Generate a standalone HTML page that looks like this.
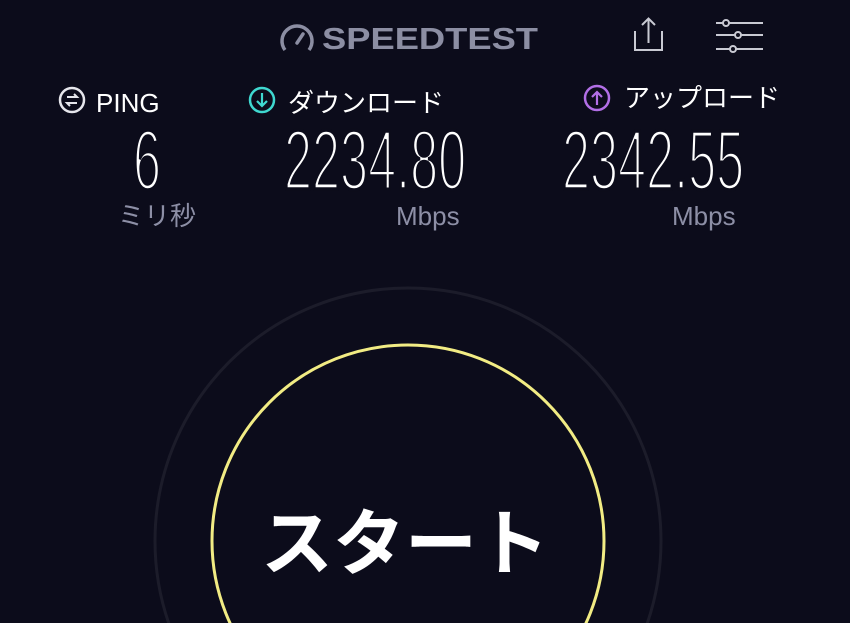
<!DOCTYPE html>
<html><head><meta charset="utf-8"><style>
html,body{margin:0;padding:0;overflow:hidden;}
body{width:850px;height:623px;background:#0c0c1b;overflow:hidden;position:relative;font-family:"Liberation Sans","Noto Sans CJK JP",sans-serif;color:#fff;}
.a{position:absolute;white-space:nowrap;}
.num{font-family:"Liberation Sans",sans-serif;font-weight:normal;font-size:84px;line-height:84px;transform-origin:left top;color:#fff;-webkit-text-stroke:3.6px #0c0c1b;}
.lbl{font-size:26px;line-height:30px;}
.unit{font-size:26px;color:#8d8fa6;line-height:30px;}
</style></head><body>
<svg class="a" style="left:278px;top:20px" width="270" height="34" viewBox="0 0 270 34">
<path d="M7 30 A15 15 0 1 1 31 30" fill="none" stroke="#8c8ea3" stroke-width="3.5"/>
<path d="M19 23 L25 14" stroke="#8c8ea3" stroke-width="3.5" stroke-linecap="round"/>
<text x="44" y="29" font-family="Liberation Sans" font-weight="bold" font-size="31" fill="#8c8ea3" textLength="216" lengthAdjust="spacingAndGlyphs">SPEEDTEST</text>
</svg>
<svg class="a" style="left:632px;top:16px" width="34" height="36" viewBox="0 0 34 36">
<path d="M3 15 V34 H30 V15 M16.5 27 V3 M10 9 L16.5 2.5 L23 9" fill="none" stroke="#c9cad3" stroke-width="2"/>
</svg>
<svg class="a" style="left:715px;top:18px" width="50" height="36" viewBox="0 0 50 36">
<g stroke="#c9cad3" stroke-width="2" fill="none">
<path d="M1 5 H8 M14 5 H48"/><circle cx="11" cy="5" r="3"/>
<path d="M1 17 H20 M26 17 H48"/><circle cx="23" cy="17" r="3"/>
<path d="M1 31 H15 M21 31 H48"/><circle cx="18" cy="31" r="3"/>
</g></svg>
<svg class="a" style="left:58px;top:86px" width="30" height="30" viewBox="0 0 30 30">
<circle cx="14" cy="14" r="12" fill="none" stroke="#e6e6ec" stroke-width="2.5"/>
<path d="M9 11 H19 L16 8 M19 17 H9 L12 20" fill="none" stroke="#e6e6ec" stroke-width="2"/>
</svg>
<div class="a lbl" style="left:96px;top:88px">PING</div>
<svg class="a" style="left:248px;top:86px" width="30" height="30" viewBox="0 0 30 30">
<circle cx="14" cy="14" r="12" fill="none" stroke="#3fd8d0" stroke-width="2.5"/>
<path d="M14 7 V20 M9 15 L14 20 L19 15" fill="none" stroke="#3fd8d0" stroke-width="2.2"/>
</svg>
<div class="a lbl" style="left:288px;top:88px">ダウンロード</div>
<svg class="a" style="left:583px;top:84px" width="30" height="30" viewBox="0 0 30 30">
<circle cx="14" cy="14" r="12" fill="none" stroke="#b26fe6" stroke-width="2.5"/>
<path d="M14 21 V8 M9 13 L14 8 L19 13" fill="none" stroke="#b26fe6" stroke-width="2.2"/>
</svg>
<div class="a lbl" style="left:624px;top:83px">アップロード</div>
<div class="a num" style="left:133px;top:118px;transform:scaleX(0.6)">6</div>
<div class="a num" style="left:284px;top:118px;transform:scaleX(0.6)">2234.80</div>
<div class="a num" style="left:562px;top:118px;transform:scaleX(0.6)">2342.55</div>
<div class="a unit" style="left:118px;top:201px">ミリ秒</div>
<div class="a unit" style="left:396px;top:201px">Mbps</div>
<div class="a unit" style="left:672px;top:201px">Mbps</div>
<svg class="a" style="left:0;top:0" width="850" height="623">
<circle cx="408" cy="541" r="253" fill="none" stroke="#1c1c2a" stroke-width="3"/>
<circle cx="408" cy="541" r="196" fill="none" stroke="#f2ec84" stroke-width="3"/>
</svg>
<div class="a" style="left:260px;top:500px;font-size:72px;line-height:90px;height:90px;font-weight:bold;width:290px;text-align:center">スタート</div>
</body></html>
